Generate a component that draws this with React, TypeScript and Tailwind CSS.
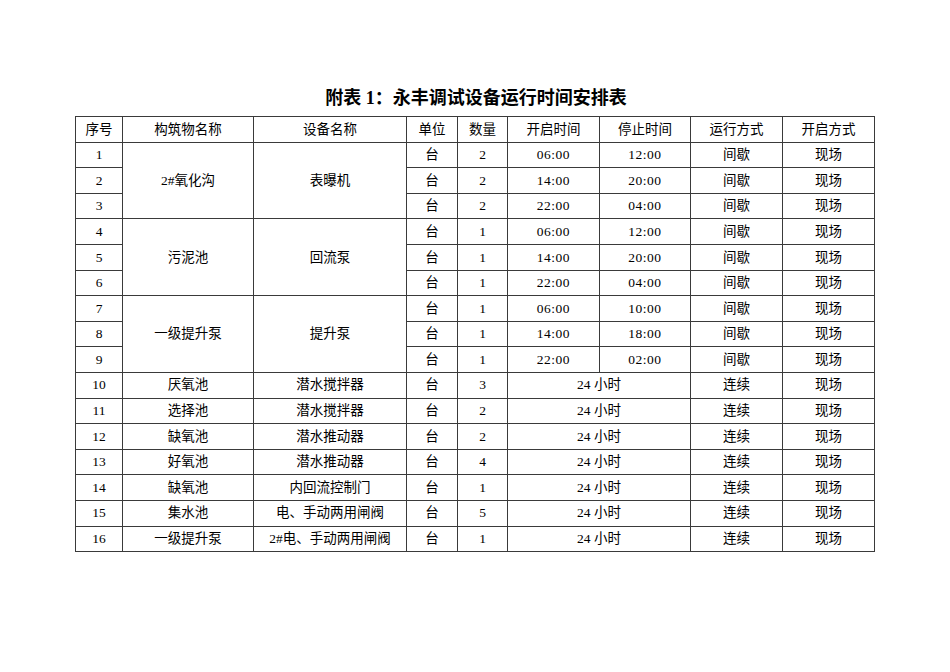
import React from "react";

type Row = {
  no: string;
  building?: string;
  device?: string;
  span?: number;
  qty: string;
  start?: string;
  stop?: string;
  mode: string;
};

const rows: Row[] = [
  { no: "1", building: "2#氧化沟", device: "表曝机", span: 3, qty: "2", start: "06:00", stop: "12:00", mode: "间歇" },
  { no: "2", qty: "2", start: "14:00", stop: "20:00", mode: "间歇" },
  { no: "3", qty: "2", start: "22:00", stop: "04:00", mode: "间歇" },
  { no: "4", building: "污泥池", device: "回流泵", span: 3, qty: "1", start: "06:00", stop: "12:00", mode: "间歇" },
  { no: "5", qty: "1", start: "14:00", stop: "20:00", mode: "间歇" },
  { no: "6", qty: "1", start: "22:00", stop: "04:00", mode: "间歇" },
  { no: "7", building: "一级提升泵", device: "提升泵", span: 3, qty: "1", start: "06:00", stop: "10:00", mode: "间歇" },
  { no: "8", qty: "1", start: "14:00", stop: "18:00", mode: "间歇" },
  { no: "9", qty: "1", start: "22:00", stop: "02:00", mode: "间歇" },
  { no: "10", building: "厌氧池", device: "潜水搅拌器", span: 1, qty: "3", mode: "连续" },
  { no: "11", building: "选择池", device: "潜水搅拌器", span: 1, qty: "2", mode: "连续" },
  { no: "12", building: "缺氧池", device: "潜水推动器", span: 1, qty: "2", mode: "连续" },
  { no: "13", building: "好氧池", device: "潜水推动器", span: 1, qty: "4", mode: "连续" },
  { no: "14", building: "缺氧池", device: "内回流控制门", span: 1, qty: "1", mode: "连续" },
  { no: "15", building: "集水池", device: "电、手动两用闸阀", span: 1, qty: "5", mode: "连续" },
  { no: "16", building: "一级提升泵", device: "2#电、手动两用闸阀", span: 1, qty: "1", mode: "连续" },
];

const cell = "border border-[#3a3a3a] h-[25.6px] p-0 text-center align-middle font-normal";
const time = cell + " tracking-[0.5px]";

export default function App() {
  return (
    <div
      className="w-[950px] h-[672px] bg-white text-black flex flex-col items-center pt-[86px]"
      style={{ fontFamily: '"Liberation Serif", "Noto Sans CJK SC", serif' }}
    >
      {/* title */}
      <h1 className="text-[18px] leading-[24px] font-bold mb-[6px] pl-[2px]">
        附表 1：永丰调试设备运行时间安排表
      </h1>
      <table className="border-collapse table-fixed w-[799px] text-[13.5px] leading-none">
        <colgroup>
          <col className="w-[47px]" />
          <col className="w-[131px]" />
          <col className="w-[153px]" />
          <col className="w-[51px]" />
          <col className="w-[50px]" />
          <col className="w-[92px]" />
          <col className="w-[91px]" />
          <col className="w-[92px]" />
          <col className="w-[92px]" />
        </colgroup>
        <thead>
          <tr>
            <th className={cell}>序号</th>
            <th className={cell}>构筑物名称</th>
            <th className={cell}>设备名称</th>
            <th className={cell}>单位</th>
            <th className={cell}>数量</th>
            <th className={cell}>开启时间</th>
            <th className={cell}>停止时间</th>
            <th className={cell}>运行方式</th>
            <th className={cell}>开启方式</th>
          </tr>
        </thead>
        <tbody>
          {rows.map((r) => (
            <tr key={r.no}>
              <td className={cell}>{r.no}</td>
              {r.building && (
                <td className={cell} rowSpan={r.span}>
                  {r.building}
                </td>
              )}
              {r.device && (
                <td className={cell} rowSpan={r.span}>
                  {r.device}
                </td>
              )}
              <td className={cell}>台</td>
              <td className={cell}>{r.qty}</td>
              {r.start ? (
                <>
                  <td className={time}>{r.start}</td>
                  <td className={time}>{r.stop}</td>
                </>
              ) : (
                <td className={cell} colSpan={2}>
                  24 小时
                </td>
              )}
              <td className={cell}>{r.mode}</td>
              <td className={cell}>现场</td>
            </tr>
          ))}
        </tbody>
      </table>
    </div>
  );
}
